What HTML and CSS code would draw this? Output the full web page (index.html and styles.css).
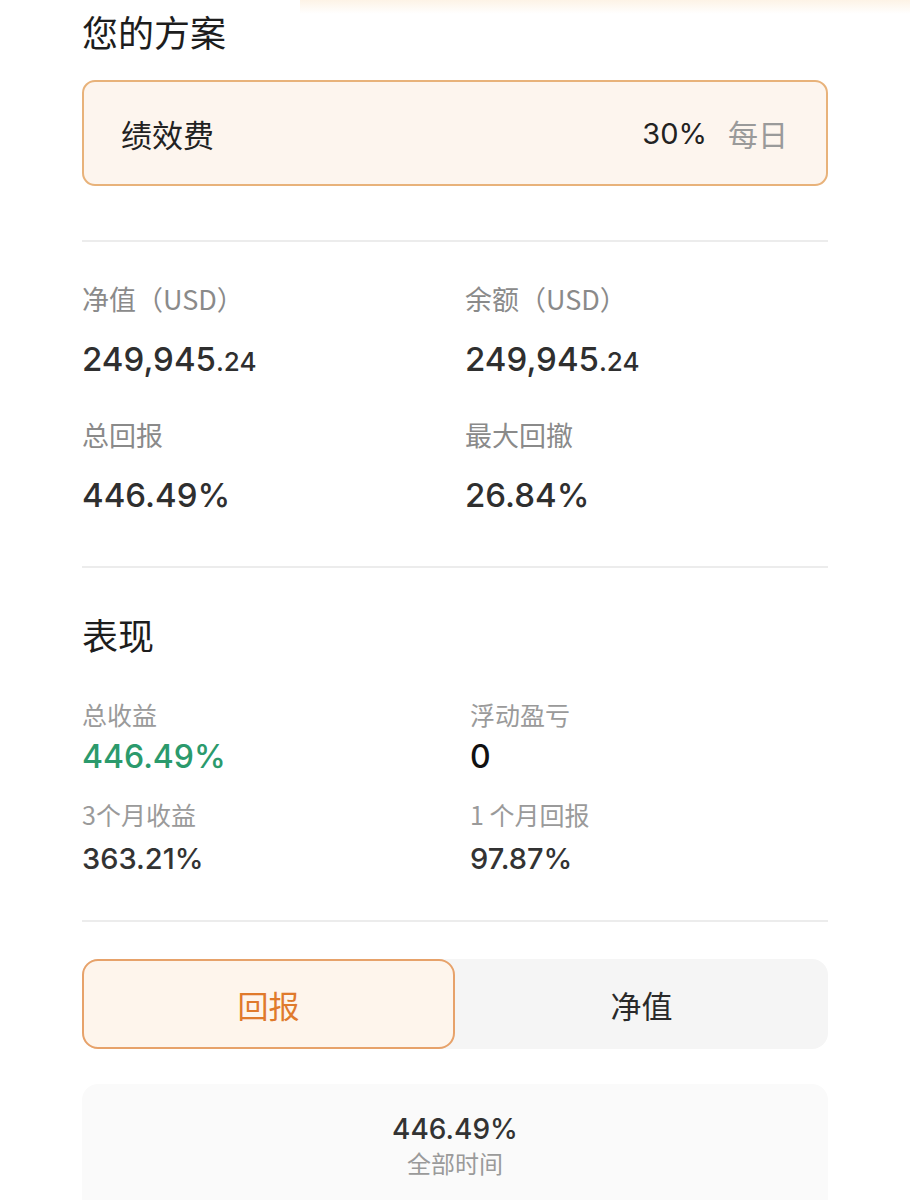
FILE: index.html
```html
<!DOCTYPE html>
<html lang="zh-CN">
<head>
<meta charset="utf-8">
<title>方案详情</title>
<link rel="stylesheet" href="styles.css">
</head>
<body>
<div class="top-fade"></div>
<main class="page">
  <h2 class="section-title title-plan">您的方案</h2>

  <div class="plan-card">
    <span class="plan-name">绩效费</span>
    <span class="plan-fee"><span class="fee-value">30%</span><span class="fee-period">每日</span></span>
  </div>

  <hr class="divider divider-first">

  <section class="account-grid">
    <div class="cell">
      <div class="label">净值（USD）</div>
      <div class="value">249,945<span class="decimals">.24</span></div>
    </div>
    <div class="cell">
      <div class="label">余额（USD）</div>
      <div class="value">249,945<span class="decimals">.24</span></div>
    </div>
    <div class="cell">
      <div class="label">总回报</div>
      <div class="value">446.49%</div>
    </div>
    <div class="cell">
      <div class="label">最大回撤</div>
      <div class="value">26.84%</div>
    </div>
  </section>

  <hr class="divider divider-second">

  <h2 class="section-title title-perf">表现</h2>

  <section class="perf-grid">
    <div class="cell">
      <div class="perf-label">总收益</div>
      <div class="perf-value positive">446.49%</div>
    </div>
    <div class="cell">
      <div class="perf-label">浮动盈亏</div>
      <div class="perf-value dark">0</div>
    </div>
    <div class="cell">
      <div class="perf-label">3个月收益</div>
      <div class="perf-value small">363.21%</div>
    </div>
    <div class="cell">
      <div class="perf-label">1 个月回报</div>
      <div class="perf-value small">97.87%</div>
    </div>
  </section>

  <hr class="divider divider-third">

  <div class="tabs">
    <button class="tab active">回报</button>
    <button class="tab">净值</button>
  </div>

  <section class="chart-card">
    <div class="chart-value">446.49%</div>
    <div class="chart-caption">全部时间</div>
  </section>
</main>
</body>
</html>
```

FILE: styles.css
```css
* {
  box-sizing: border-box;
}

html, body {
  margin: 0;
  padding: 0;
  background: #ffffff;
}

body {
  font-family: Inter, "Noto Sans CJK SC", sans-serif;
  color: #333333;
  overflow: hidden;
  height: 1200px;
  position: relative;
}

.top-fade {
  position: absolute;
  top: 0;
  left: 300px;
  right: 0;
  height: 14px;
  background: linear-gradient(to bottom, #fdf3e6, rgba(255, 255, 255, 0));
}

.page {
  padding: 9px 82px 0;
  width: 910px;
}

.section-title {
  margin: 0;
  font-family: "Noto Sans CJK SC", sans-serif;
  font-weight: 400;
  font-size: 36px;
  line-height: 44px;
  color: #1d1d1d;
}

.plan-card {
  margin-top: 27px;
  height: 106px;
  border: 2px solid #e8b27a;
  border-radius: 13px;
  background: #fdf5ee;
  display: flex;
  align-items: center;
  justify-content: space-between;
  padding: 0 38px 0 37px;
}

.plan-name {
  font-family: "Noto Sans CJK SC", sans-serif;
  font-size: 31px;
  color: #222222;
}

.plan-fee {
  display: flex;
  align-items: center;
  gap: 21px;
}

.fee-value {
  font-size: 29px;
  color: #222222;
}

.fee-period {
  font-family: "Noto Sans CJK SC", sans-serif;
  font-size: 30px;
  color: #9a9a9a;
}

.divider {
  border: 0;
  height: 2px;
  background: #ececec;
  margin: 0;
}

.divider-first {
  margin-top: 54px;
}

.divider-second {
  margin-top: 49px;
}

.divider-third {
  margin-top: 41px;
}

.account-grid {
  display: grid;
  grid-template-columns: 383px 1fr;
  padding-top: 39px;
  row-gap: 33px;
}

.label {
  font-family: "Noto Sans CJK SC", sans-serif;
  font-size: 27px;
  line-height: 36px;
  color: #8a8a8a;
}

.value {
  margin-top: 20px;
  font-size: 33px;
  line-height: 44px;
  font-weight: 500;
  color: #2f2f2f;
}

.value .decimals {
  font-size: 26px;
}

.title-perf {
  margin-top: 44px;
}

.perf-grid {
  display: grid;
  grid-template-columns: 388px 1fr;
  padding-top: 42px;
  row-gap: 21px;
}

.perf-label {
  font-family: "Noto Sans CJK SC", sans-serif;
  font-size: 25px;
  line-height: 32px;
  color: #9a9a9a;
}

.perf-value {
  margin-top: 7px;
  font-size: 32px;
  line-height: 40px;
  font-weight: 500;
  color: #333333;
}

.perf-value.positive {
  color: #2b9a6c;
}

.perf-value.dark {
  color: #111111;
}

.perf-value.small {
  margin-top: 9px;
  font-size: 29px;
}

.tabs {
  margin-top: 37px;
  height: 90px;
  display: flex;
  background: #f5f5f5;
  border-radius: 16px;
}

.tab {
  flex: 1;
  border: 0;
  background: transparent;
  font-family: "Noto Sans CJK SC", sans-serif;
  font-size: 31px;
  color: #2a2a2a;
  border-radius: 16px;
  padding: 0;
  cursor: pointer;
}

.tab.active {
  flex: 0 0 373px;
  background: #fef5ec;
  border: 2px solid #e7a26a;
  color: #e07a2c;
}

.chart-card {
  margin-top: 35px;
  height: 200px;
  background: #fafafa;
  border-radius: 16px;
  display: flex;
  flex-direction: column;
  align-items: center;
  padding-top: 27px;
}

.chart-value {
  font-size: 28px;
  line-height: 36px;
  font-weight: 500;
  color: #333333;
}

.chart-caption {
  font-family: "Noto Sans CJK SC", sans-serif;
  font-size: 24px;
  line-height: 32px;
  color: #9a9a9a;
}
```
